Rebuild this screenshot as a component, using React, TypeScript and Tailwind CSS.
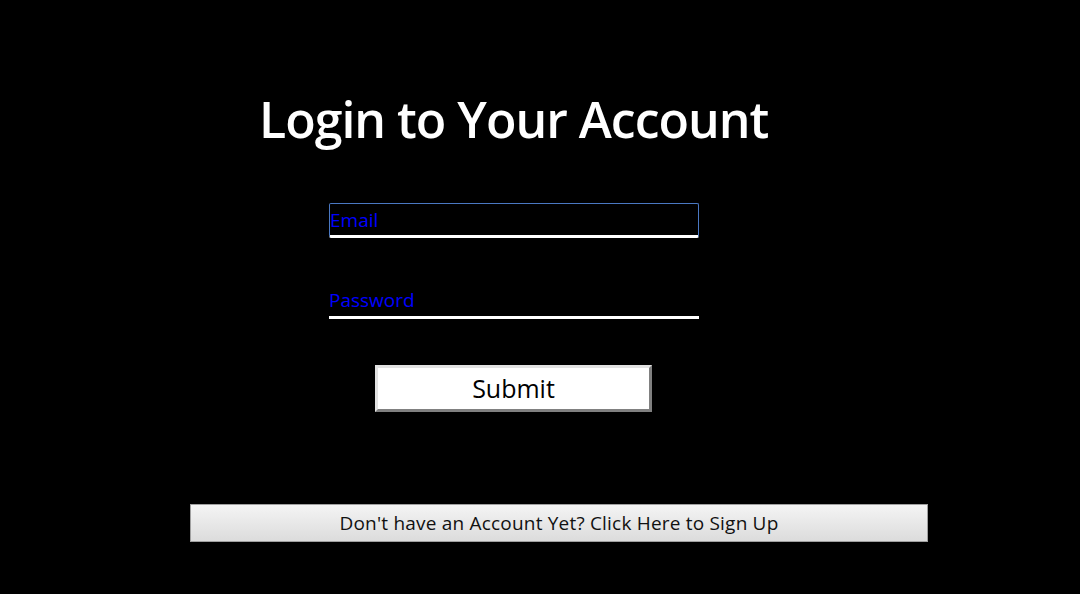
export default function App() {
  return (
    <div
      className="min-h-[594px] w-full bg-black text-white"
      style={{ fontFamily: '"Open Sans", "Noto Sans", sans-serif' }}
    >
      <div className="flex flex-col pt-[86px]">
        <h1 className="ml-[259px] text-[50px] font-semibold leading-[66px] tracking-[-1px] text-white">
          Login to Your Account
        </h1>

        <form className="ml-[329px] mt-[51px] flex w-[370px] flex-col" onSubmit={(e) => e.preventDefault()}>
          <input
            type="email"
            placeholder="Email"
            className="h-[35px] w-full rounded-[2px] border border-[#4a78c2] border-b-[3px] border-b-white bg-black px-0 text-[19px] text-[#0000ff] placeholder:text-[#0000ff] outline-none"
          />
          <input
            type="password"
            placeholder="Password"
            className="mt-[46px] h-[35px] w-full border-b-[3px] border-white bg-black px-0 text-[19px] text-[#0000ff] placeholder:text-[#0000ff] outline-none"
          />
          <div className="mt-[46px] flex">
            <button
              type="submit"
              className="ml-[46px] h-[47px] w-[277px] border-[3px] border-t-[#e2e2e2] border-l-[#e2e2e2] border-b-[#808080] border-r-[#808080] bg-white text-[25px] leading-none text-black"
            >
              Submit
            </button>
          </div>
        </form>

        <button
          type="button"
          className="ml-[190px] mt-[92px] h-[38px] w-[738px] border border-[#a0a0a0] bg-gradient-to-b from-[#f4f4f4] to-[#dcdcdc] text-[19px] tracking-[0.2px] text-[#111]"
        >
          Don't have an Account Yet? Click Here to Sign Up
        </button>
      </div>
    </div>
  )
}
